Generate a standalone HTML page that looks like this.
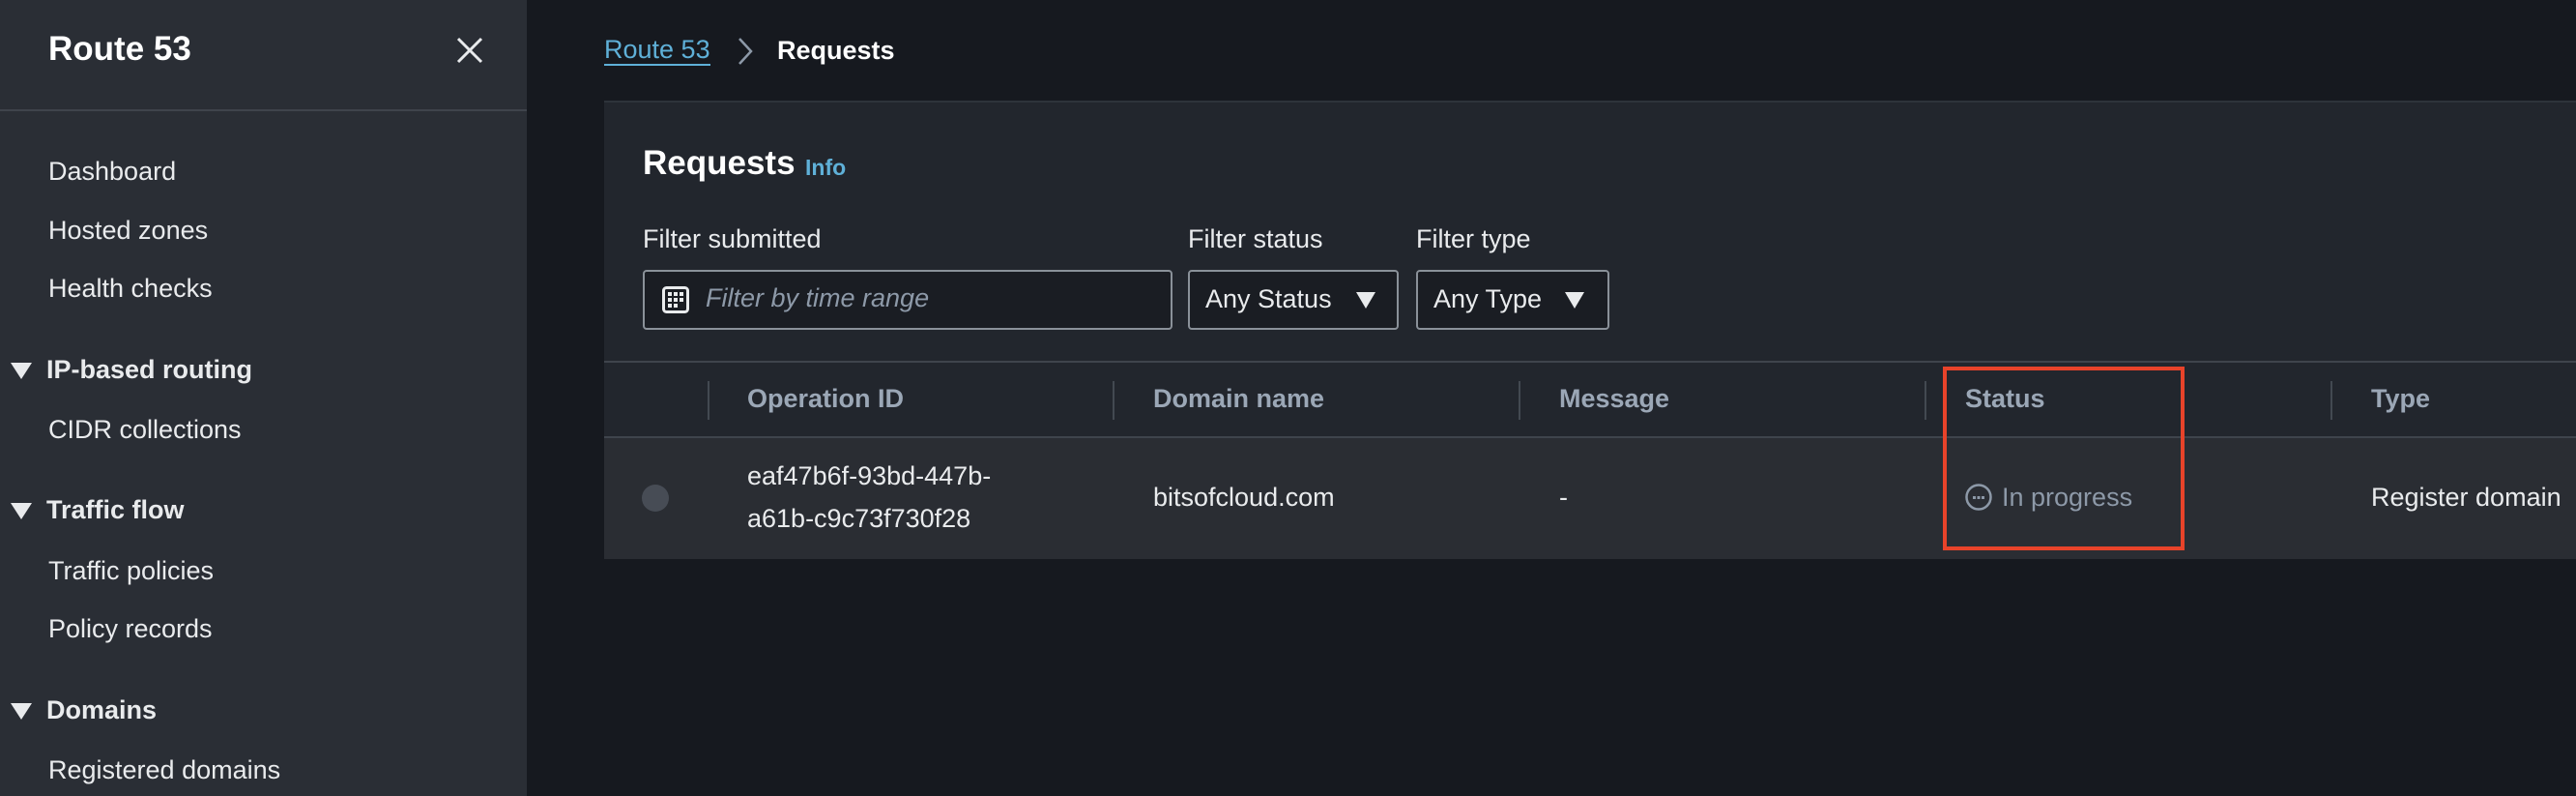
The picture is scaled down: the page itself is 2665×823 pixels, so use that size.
<!DOCTYPE html>
<html><head><meta charset="utf-8"><style>
*{box-sizing:border-box;margin:0;padding:0}
body{width:2665px;height:823px;background:#16191f;font-family:"Liberation Sans",sans-serif;position:relative;overflow:hidden;color:#e9ebed}
.a{position:absolute;white-space:nowrap}
#side{position:absolute;left:0;top:0;width:545px;height:823px;background:#2a2e35}
.nav{font-size:27px;color:#e9ebed;left:50px}
.sec{font-size:27px;font-weight:bold;left:48px}
.tri{position:absolute;left:11px;width:0;height:0;border-left:11px solid transparent;border-right:11px solid transparent;border-top:17px solid #e9ebed}
.hd{font-size:27px;font-weight:bold;color:#9ba7b6;top:397px}
.sep{position:absolute;top:394px;width:2px;height:40px;background:#434951}
.box{position:absolute;border:2px solid #8a9199;border-radius:4px;background:#1a1d23}
.dd{font-size:27px;color:#e9ebed}
.dt{position:absolute;width:0;height:0;border-left:10px solid transparent;border-right:10px solid transparent;border-top:17px solid #e9ebed}
</style></head><body>
<div id="side">
<div class="a" style="left:50px;top:31px;font-size:35px;font-weight:bold;color:#fff">Route 53</div>
<svg class="a" style="left:471px;top:37px" width="30" height="30" viewBox="0 0 30 30"><path d="M3 3L27 27M27 3L3 27" stroke="#e9ebed" stroke-width="3"/></svg>
<div class="a" style="left:0;top:113px;width:545px;height:2px;background:#3f444c"></div>
<div class="a nav" style="top:162px">Dashboard</div>
<div class="a nav" style="top:223px">Hosted zones</div>
<div class="a nav" style="top:283px">Health checks</div>
<div class="tri" style="top:375px"></div><div class="a sec" style="top:367px">IP-based routing</div>
<div class="a nav" style="top:429px">CIDR collections</div>
<div class="tri" style="top:520px"></div><div class="a sec" style="top:512px">Traffic flow</div>
<div class="a nav" style="top:575px">Traffic policies</div>
<div class="a nav" style="top:635px">Policy records</div>
<div class="tri" style="top:727px"></div><div class="a sec" style="top:719px">Domains</div>
<div class="a nav" style="top:781px">Registered domains</div>
</div>
<div class="a" style="left:625px;top:37px;font-size:27px;color:#5fb0d8;border-bottom:2px solid #5fb0d8;line-height:29px">Route 53</div>
<svg class="a" style="left:762px;top:38px" width="18" height="30" viewBox="0 0 18 30"><path d="M3 2L15 15L3 28" stroke="#8d99a8" stroke-width="2.5" fill="none"/></svg>
<div class="a" style="left:804px;top:37px;font-size:27px;font-weight:bold;color:#fff">Requests</div>
<div class="a" style="left:625px;top:104px;width:2040px;height:474px;background:#22262d;border-top:2px solid #2e333a"></div>
<div class="a" style="left:665px;top:149px;font-size:35px;font-weight:bold;color:#fff">Requests</div>
<div class="a" style="left:833px;top:160px;font-size:23px;font-weight:bold;color:#5fb0d8">Info</div>
<div class="a" style="left:665px;top:232px;font-size:27px">Filter submitted</div>
<div class="a" style="left:1229px;top:232px;font-size:27px">Filter status</div>
<div class="a" style="left:1465px;top:232px;font-size:27px">Filter type</div>
<div class="box" style="left:665px;top:279px;width:548px;height:62px"></div>
<svg class="a" style="left:685px;top:296px" width="28" height="28" viewBox="0 0 28 28"><rect x="1.5" y="1.5" width="25" height="25" rx="3" fill="none" stroke="#e9ebed" stroke-width="3"/><g fill="#e9ebed"><rect x="6" y="6" width="4" height="4"/><rect x="12" y="6" width="4" height="4"/><rect x="18" y="6" width="4" height="4"/><rect x="6" y="12" width="4" height="4"/><rect x="12" y="12" width="4" height="4"/><rect x="18" y="12" width="4" height="4"/><rect x="6" y="18" width="4" height="4"/><rect x="12" y="18" width="4" height="4"/></g></svg>
<div class="a" style="left:730px;top:293px;font-size:27px;font-style:italic;color:#8d99a8">Filter by time range</div>
<div class="box" style="left:1229px;top:279px;width:218px;height:62px"></div>
<div class="a dd" style="left:1247px;top:294px">Any Status</div><div class="dt" style="left:1403px;top:302px"></div>
<div class="box" style="left:1465px;top:279px;width:200px;height:62px"></div>
<div class="a dd" style="left:1483px;top:294px">Any Type</div><div class="dt" style="left:1619px;top:302px"></div>
<div class="a" style="left:625px;top:373px;width:2040px;height:2px;background:#3f444c"></div>
<div class="sep" style="left:732px"></div><div class="sep" style="left:1151px"></div><div class="sep" style="left:1571px"></div><div class="sep" style="left:1991px"></div><div class="sep" style="left:2411px"></div>
<div class="a hd" style="left:773px">Operation ID</div>
<div class="a hd" style="left:1193px">Domain name</div>
<div class="a hd" style="left:1613px">Message</div>
<div class="a hd" style="left:2033px">Status</div>
<div class="a hd" style="left:2453px">Type</div>
<div class="a" style="left:625px;top:451px;width:2040px;height:2px;background:#3f444c"></div>
<div class="a" style="left:625px;top:453px;width:2040px;height:125px;background:#2a2d33"></div>
<div class="a" style="left:664px;top:501px;width:28px;height:28px;border-radius:50%;background:#474c55"></div>
<div class="a" style="left:773px;top:477px;font-size:27px">eaf47b6f-93bd-447b-</div>
<div class="a" style="left:773px;top:521px;font-size:27px">a61b-c9c73f730f28</div>
<div class="a" style="left:1193px;top:499px;font-size:27px">bitsofcloud.com</div>
<div class="a" style="left:1613px;top:499px;font-size:27px">-</div>
<svg class="a" style="left:2032px;top:499px" width="30" height="30" viewBox="0 0 30 30"><circle cx="15" cy="15" r="12.5" fill="none" stroke="#8d99a8" stroke-width="2.5"/><g fill="#8d99a8"><rect x="9" y="14" width="3" height="3"/><rect x="13.5" y="14" width="3" height="3"/><rect x="18" y="14" width="3" height="3"/></g></svg>
<div class="a" style="left:2071px;top:499px;font-size:27px;color:#8d99a8">In progress</div>
<div class="a" style="left:2453px;top:499px;font-size:27px">Register domain</div>
<div class="a" style="left:2010px;top:379px;width:250px;height:190px;border:4px solid #e8432a"></div>
</body></html>
